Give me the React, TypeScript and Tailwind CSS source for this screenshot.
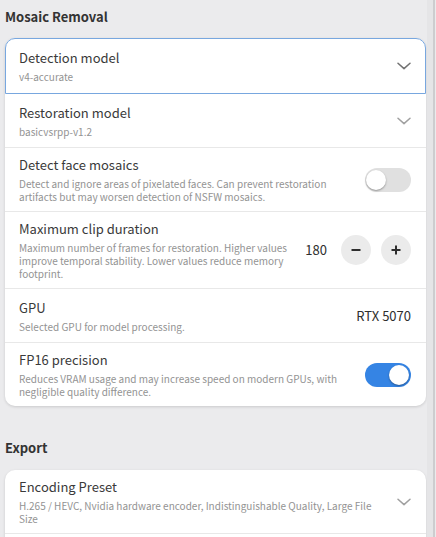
import { useState } from "react"

const font = { fontFamily: '"Noto Sans CJK KR", "Noto Sans", sans-serif' }

function Chevron({ dark }: { dark?: boolean }) {
  return (
    <svg width="14" height="8" viewBox="0 0 14 8" className="shrink-0">
      <path
        d="M1 1.2 L7 6.6 L13 1.2"
        fill="none"
        stroke={dark ? "#727272" : "#a0a0a0"}
        strokeWidth="1.5"
        strokeLinecap="round"
        strokeLinejoin="round"
      />
    </svg>
  )
}

function Switch({ on, onToggle }: { on: boolean; onToggle: () => void }) {
  return (
    <button
      onClick={onToggle}
      className={`relative h-[24px] w-[46px] shrink-0 rounded-full transition-colors ${on ? "bg-[#3584e4]" : "bg-[#e0e0e0]"}`}
    >
      <span
        className={`absolute top-[2px] h-[20px] w-[20px] rounded-full bg-white shadow-[0_1px_2px_rgba(0,0,0,0.35)] ${on ? "left-[24px]" : "left-[1px]"}`}
      />
    </button>
  )
}

function Texts({ title, desc }: { title: string; desc: string }) {
  return (
    <div className="min-w-0 flex-1">
      <div className="text-[13px] leading-[18px] text-[#3a3a3a]">{title}</div>
      <div className="mt-[3px] text-[10px] leading-[13px] text-[#939393]">{desc}</div>
    </div>
  )
}

function Row({ children, last }: { children: React.ReactNode; last?: boolean }) {
  return (
    <div
      className={`flex min-h-[54px] items-center gap-3 py-2 pl-[14px] pr-[15px] ${last ? "" : "border-b border-[#e8e8e8]"}`}
    >
      {children}
    </div>
  )
}

function RoundButton({ children, onClick }: { children: React.ReactNode; onClick: () => void }) {
  return (
    <button
      onClick={onClick}
      className="flex h-[30px] w-[30px] items-center justify-center rounded-full bg-[#ebebeb] text-[#2e2e2e]"
    >
      {children}
    </button>
  )
}

export default function App() {
  const [faces, setFaces] = useState(false)
  const [fp16, setFp16] = useState(true)
  const [clip, setClip] = useState(180)

  return (
    <div className="flex h-[537px] w-full overflow-hidden bg-[#ebebed]" style={font}>
      <div className="w-[427px] shrink-0 pl-[5px] pr-[1px] pt-[8px]">
        <h2 className="mb-[12px] text-[13px] font-bold leading-[18px] text-[#333]">Mosaic Removal</h2>

        <div className="rounded-[10px] bg-white shadow-[0_1px_3px_rgba(0,0,0,0.14)]">
          <div className="flex min-h-[56px] items-center gap-3 rounded-t-[10px] border border-[#78a7df] py-2 pl-[13px] pr-[14px]">
            <Texts title="Detection model" desc="v4-accurate" />
            <Chevron dark />
          </div>

          <Row>
            <Texts title="Restoration model" desc="basicvsrpp-v1.2" />
            <Chevron />
          </Row>

          <Row>
            <Texts
              title="Detect face mosaics"
              desc="Detect and ignore areas of pixelated faces. Can prevent restoration artifacts but may worsen detection of NSFW mosaics."
            />
            <Switch on={faces} onToggle={() => setFaces(!faces)} />
          </Row>

          <Row>
            <Texts
              title="Maximum clip duration"
              desc="Maximum number of frames for restoration. Higher values improve temporal stability. Lower values reduce memory footprint."
            />
            <div className="flex items-center">
              <span className="mr-[14px] text-[13px] text-[#2e2e2e]">{clip}</span>
              <RoundButton onClick={() => setClip(clip - 1)}>
                <svg width="12" height="12" viewBox="0 0 12 12">
                  <path d="M1.5 6 H10.5" stroke="currentColor" strokeWidth="2" />
                </svg>
              </RoundButton>
              <div className="w-[10px]" />
              <RoundButton onClick={() => setClip(clip + 1)}>
                <svg width="12" height="12" viewBox="0 0 12 12">
                  <path d="M1.5 6 H10.5 M6 1.5 V10.5" stroke="currentColor" strokeWidth="2" />
                </svg>
              </RoundButton>
            </div>
          </Row>

          <Row>
            <Texts title="GPU" desc="Selected GPU for model processing." />
            <span className="text-[13px] text-[#2e2e2e]">RTX 5070</span>
          </Row>

          <Row last>
            <Texts
              title="FP16 precision"
              desc="Reduces VRAM usage and may increase speed on modern GPUs, with negligible quality difference."
            />
            <Switch on={fp16} onToggle={() => setFp16(!fp16)} />
          </Row>
        </div>

        <h2 className="mb-[13px] mt-[33px] text-[13px] font-bold leading-[18px] text-[#333]">Export</h2>

        <div className="rounded-[10px] bg-white shadow-[0_1px_3px_rgba(0,0,0,0.14)]">
          <Row>
            <Texts
              title="Encoding Preset"
              desc="H.265 / HEVC, Nvidia hardware encoder, Indistinguishable Quality, Large File Size"
            />
            <Chevron />
          </Row>
          <div className="h-[60px]" />
        </div>
      </div>

      {/* scrollbar track */}
      <div className="flex flex-1">
        <div className="w-[6px] bg-[#e5e5e7]" />
        <div className="w-[2px] bg-[#cdcdcf]" />
      </div>
    </div>
  )
}
